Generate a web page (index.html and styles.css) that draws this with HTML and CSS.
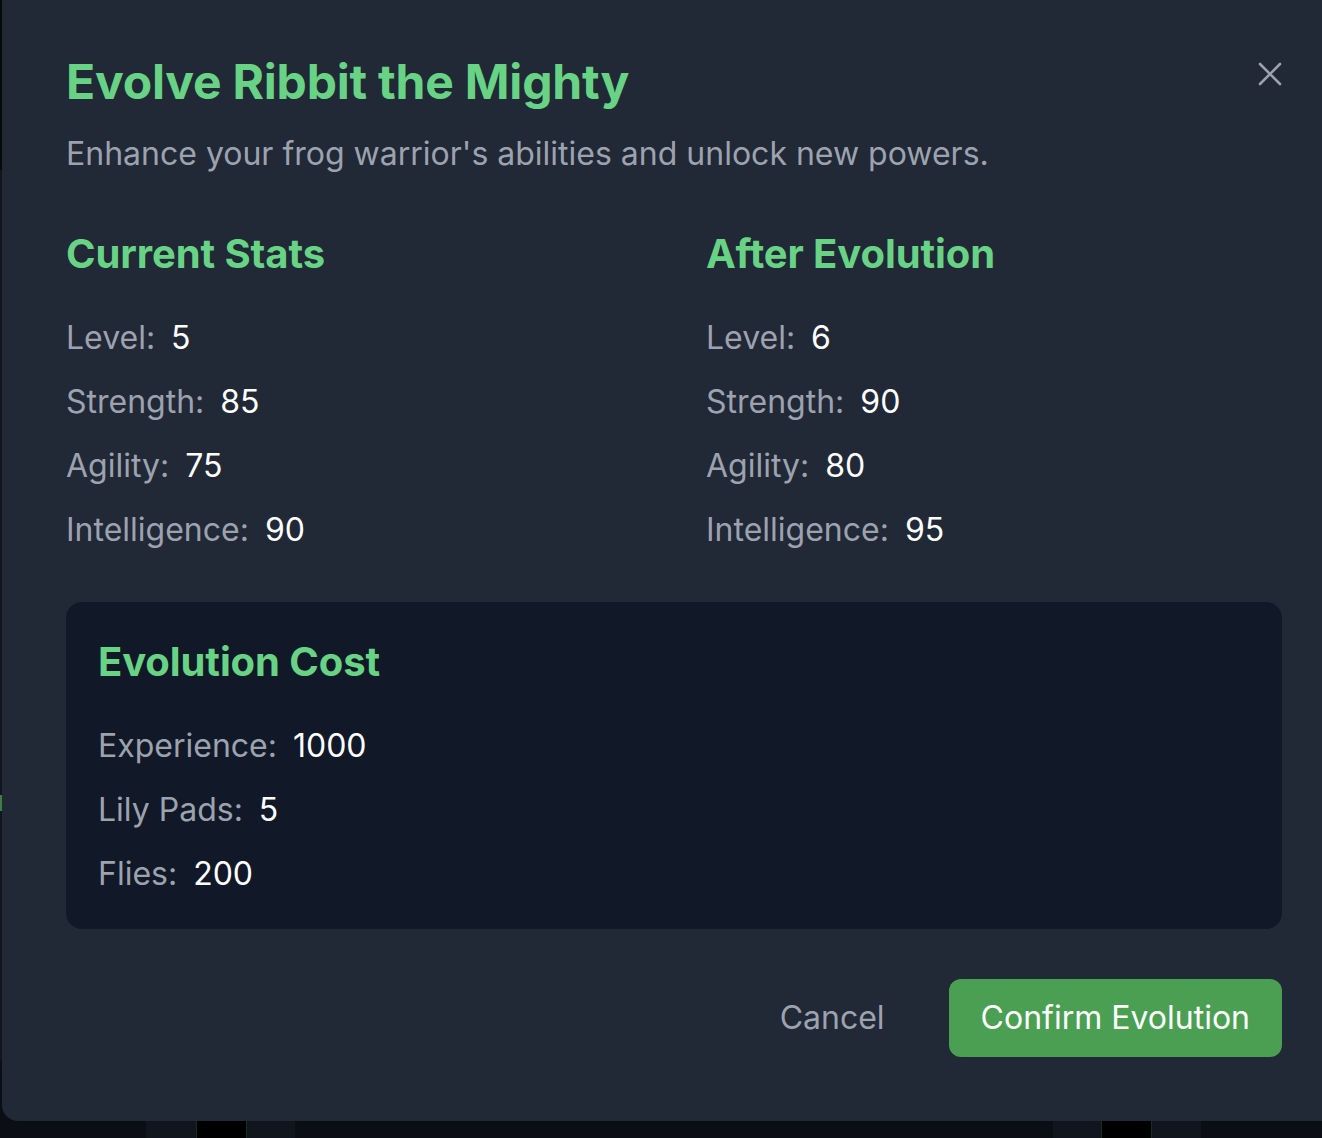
FILE: index.html
```html
<!DOCTYPE html>
<html lang="en">
<head>
<meta charset="utf-8">
<title>Evolve Ribbit the Mighty</title>
<link rel="stylesheet" href="styles.css">
</head>
<body>
<div class="backdrop">
  <div class="bg-strip-top"></div>
  <div class="bg-green-tick"></div>
  <div class="bg-card bg-card-a"></div>
  <div class="bg-cell bg-cell-a"></div>
  <div class="bg-card bg-card-b"></div>
  <div class="bg-card bg-card-c"></div>
  <div class="bg-cell bg-cell-b"></div>
  <div class="bg-card bg-card-d"></div>
</div>

<div class="modal" role="dialog" aria-labelledby="modal-title">
  <button class="close-btn" aria-label="Close">
    <svg viewBox="0 0 24 24" width="24" height="24" fill="none" stroke="currentColor" stroke-width="2.6" stroke-linecap="round">
      <path d="M2 2 L22 22 M22 2 L2 22"/>
    </svg>
  </button>

  <h1 class="title" id="modal-title">Evolve Ribbit the Mighty</h1>
  <p class="subtitle">Enhance your frog warrior's abilities and unlock new powers.</p>

  <div class="stats-grid">
    <section class="stats-col">
      <h2 class="section-title">Current Stats</h2>
      <ul class="stat-list">
        <li class="stat"><span class="stat-label">Level:</span><span class="stat-value">5</span></li>
        <li class="stat"><span class="stat-label">Strength:</span><span class="stat-value">85</span></li>
        <li class="stat"><span class="stat-label">Agility:</span><span class="stat-value">75</span></li>
        <li class="stat"><span class="stat-label">Intelligence:</span><span class="stat-value">90</span></li>
      </ul>
    </section>
    <section class="stats-col">
      <h2 class="section-title">After Evolution</h2>
      <ul class="stat-list">
        <li class="stat"><span class="stat-label">Level:</span><span class="stat-value">6</span></li>
        <li class="stat"><span class="stat-label">Strength:</span><span class="stat-value">90</span></li>
        <li class="stat"><span class="stat-label">Agility:</span><span class="stat-value">80</span></li>
        <li class="stat"><span class="stat-label">Intelligence:</span><span class="stat-value">95</span></li>
      </ul>
    </section>
  </div>

  <section class="cost-box">
    <h2 class="section-title">Evolution Cost</h2>
    <ul class="stat-list">
      <li class="stat"><span class="stat-label">Experience:</span><span class="stat-value">1000</span></li>
      <li class="stat"><span class="stat-label">Lily Pads:</span><span class="stat-value">5</span></li>
      <li class="stat"><span class="stat-label">Flies:</span><span class="stat-value">200</span></li>
    </ul>
  </section>

  <div class="actions">
    <button class="btn btn-ghost">Cancel</button>
    <button class="btn btn-primary">Confirm Evolution</button>
  </div>
</div>
</body>
</html>
```

FILE: styles.css
```css
* {
  box-sizing: border-box;
}

html, body {
  margin: 0;
  padding: 0;
}

body {
  width: 1322px;
  height: 1138px;
  overflow: hidden;
  position: relative;
  background: #11151e;
  font-family: Inter, "Noto Sans", sans-serif;
}

/* dimmed page behind the dialog */
.backdrop {
  position: absolute;
  inset: 0;
}

.bg-strip-top {
  position: absolute;
  left: 0;
  top: 0;
  width: 4px;
  height: 170px;
  background: #07090d;
}

.bg-green-tick {
  position: absolute;
  left: 0;
  top: 795px;
  width: 4px;
  height: 16px;
  background: #3f7e45;
}

.bg-card {
  position: absolute;
  top: 1060px;
  height: 120px;
  background: #0b0e15;
}

.bg-card-a { left: -20px; width: 166px; border-radius: 0 16px 16px 0; }
.bg-card-b { left: 295px; width: 460px; border-radius: 16px; }
.bg-card-c { left: 600px; width: 453px; border-radius: 16px; }
.bg-card-d { left: 1201px; width: 200px; border-radius: 16px 0 0 16px; }

.bg-cell {
  position: absolute;
  top: 1060px;
  width: 51px;
  height: 120px;
  background: #000;
  border-left: 1px solid #14301a;
  border-right: 1px solid #14301a;
}

.bg-cell-a { left: 196px; }
.bg-cell-b { left: 1101px; }

/* dialog */
.modal {
  position: absolute;
  left: 2px;
  top: -20px;
  width: 1344px;
  padding: 70px 64px 64px;
  background: #212836;
  border-radius: 16px;
}

.close-btn {
  position: absolute;
  top: 81px;
  right: 63px;
  width: 26px;
  height: 26px;
  padding: 0;
  border: 0;
  background: none;
  color: #9ca3af;
  display: flex;
  align-items: center;
  justify-content: center;
}

.title {
  margin: 0;
  font-size: 48px;
  line-height: 64px;
  font-weight: 700;
  color: #68d385;
  letter-spacing: -0.2px;
}

.subtitle {
  margin: 20px 0 0;
  font-size: 32px;
  line-height: 40px;
  color: #9ca3af;
}

.stats-grid {
  display: grid;
  grid-template-columns: 1fr 1fr;
  column-gap: 64px;
  margin-top: 56px;
}

.section-title {
  margin: 0;
  font-size: 40px;
  line-height: 48px;
  font-weight: 700;
  color: #68d385;
  letter-spacing: -0.1px;
}

.stat-list {
  list-style: none;
  margin: 36px 0 0;
  padding: 0;
  display: flex;
  flex-direction: column;
  gap: 16px;
}

.stat {
  display: flex;
  gap: 16px;
  font-size: 32px;
  line-height: 48px;
}

.stat-label {
  color: #9ca3af;
}

.stat-value {
  color: #ffffff;
}

.cost-box {
  margin-top: 48px;
  padding: 36px 32px 31px;
  background: #111827;
  border-radius: 16px;
}

.actions {
  display: flex;
  justify-content: flex-end;
  gap: 32px;
  margin-top: 50px;
}

.btn {
  font-family: inherit;
  font-size: 32px;
  line-height: 46px;
  padding: 16px 32px;
  border: 0;
  border-radius: 12px;
  cursor: pointer;
}

.btn-ghost {
  background: transparent;
  color: #9ca3af;
}

.btn-primary {
  background: #4a9f53;
  color: #ffffff;
}
```
